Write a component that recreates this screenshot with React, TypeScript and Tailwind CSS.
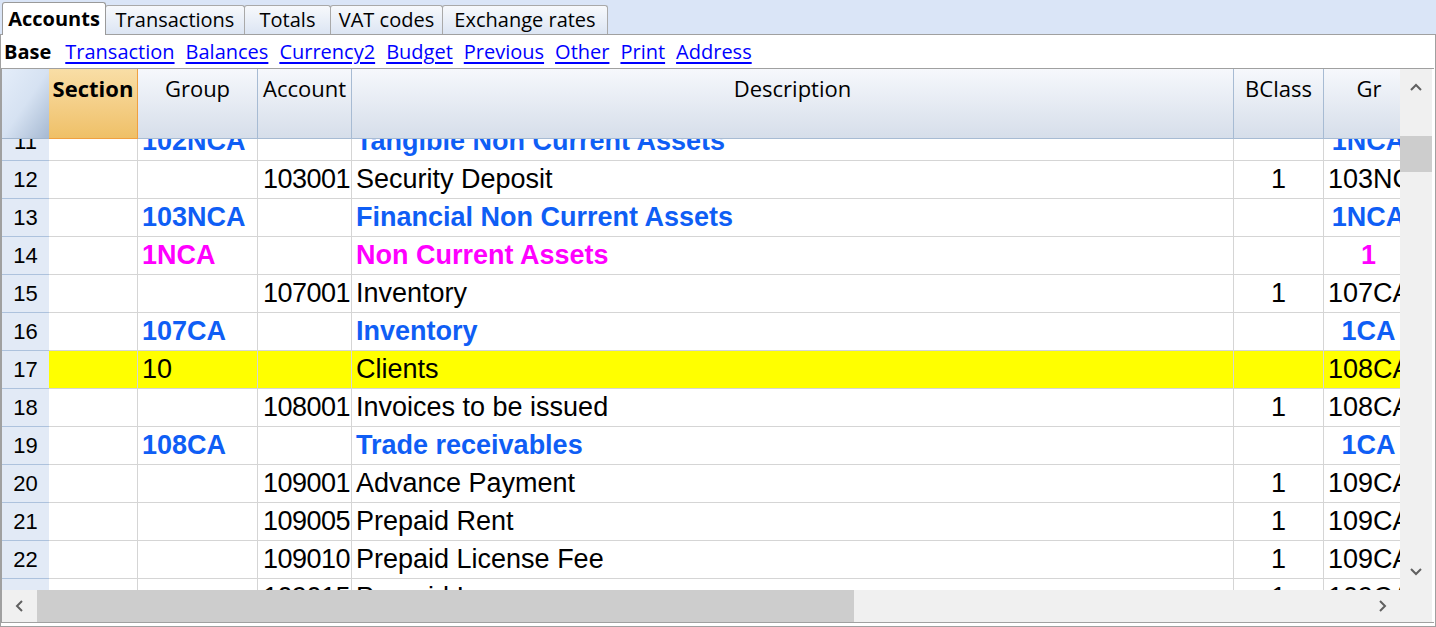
import React from "react";

type Row = {
  n: number;
  group?: string;
  account?: string;
  desc?: string;
  bclass?: string;
  gr?: string;
  kind?: "blue" | "magenta" | "plain";
  yellow?: boolean;
};

const rows: Row[] = [
  { n: 11, group: "102NCA", desc: "Tangible Non Current Assets", gr: "1NCA", kind: "blue" },
  { n: 12, account: "103001", desc: "Security Deposit", bclass: "1", gr: "103NCA" },
  { n: 13, group: "103NCA", desc: "Financial Non Current Assets", gr: "1NCA", kind: "blue" },
  { n: 14, group: "1NCA", desc: "Non Current Assets", gr: "1", kind: "magenta" },
  { n: 15, account: "107001", desc: "Inventory", bclass: "1", gr: "107CA" },
  { n: 16, group: "107CA", desc: "Inventory", gr: "1CA", kind: "blue" },
  { n: 17, group: "10", desc: "Clients", gr: "108CA", yellow: true },
  { n: 18, account: "108001", desc: "Invoices to be issued", bclass: "1", gr: "108CA" },
  { n: 19, group: "108CA", desc: "Trade receivables", gr: "1CA", kind: "blue" },
  { n: 20, account: "109001", desc: "Advance Payment", bclass: "1", gr: "109CA" },
  { n: 21, account: "109005", desc: "Prepaid Rent", bclass: "1", gr: "109CA" },
  { n: 22, account: "109010", desc: "Prepaid License Fee", bclass: "1", gr: "109CA" },
  { n: 23, account: "109015", desc: "Prepaid Insurance", bclass: "1", gr: "109CA" },
];

const tabs = [
  { label: "Accounts", w: "w-[104px]", active: true },
  { label: "Transactions", w: "w-[140px]" },
  { label: "Totals", w: "w-[87px]" },
  { label: "VAT codes", w: "w-[113px]" },
  { label: "Exchange rates", w: "w-[166px]" },
];

const links = ["Transaction", "Balances", "Currency2", "Budget", "Previous", "Other", "Print", "Address"];

const cols = "grid grid-cols-[47px_89px_120px_94px_882px_90px_90px]";

function Chevron({ dir }: { dir: "up" | "down" | "left" | "right" }) {
  const pts = {
    up: "2,9 7,4 12,9",
    down: "2,5 7,10 12,5",
    left: "9,2 4,7 9,12",
    right: "5,2 10,7 5,12",
  }[dir];
  return (
    <svg width="14" height="14" viewBox="0 0 14 14">
      <polyline points={pts} fill="none" stroke="#606060" strokeWidth="2" />
    </svg>
  );
}

function BodyRow({ r }: { r: Row }) {
  const bold = r.kind === "blue" || r.kind === "magenta";
  const color = r.kind === "blue" ? "text-[#0f5ef5]" : r.kind === "magenta" ? "text-[#ff00ff]" : "text-black";
  const bg = r.yellow ? "bg-[#ffff00]" : "bg-white";
  const cell = `h-[38px] border-b border-r border-[#d5d5d5] flex items-center overflow-hidden whitespace-nowrap ${bg} ${color} ${bold ? "font-bold" : ""}`;
  return (
    <div className={`${cols} text-[27px] font-['Liberation_Sans',Arial,sans-serif]`}>
      <div className="h-[38px] border-b border-[#adc2dd] bg-[#e2eaf6] flex items-center justify-center text-[22px] text-black">
        {r.n}
      </div>
      <div className={cell} />
      <div className={`${cell} pl-[4px]`}>{r.group}</div>
      <div className={`${cell} justify-end pr-[1px] tracking-[-0.5px]`}>{r.account}</div>
      <div className={`${cell} pl-[4px]`}>{r.desc}</div>
      <div className={`${cell} justify-center`}>{r.bclass}</div>
      <div className={`${cell} ${bold ? "justify-center" : "pl-[4px]"}`}>{r.gr}</div>
    </div>
  );
}

export default function App() {
  return (
    <div className="w-[1436px] h-[627px] bg-[#dae5f7] flex flex-col overflow-hidden font-['Open_Sans','Noto_Sans',sans-serif]">
      {/* Tabs */}
      <div className="h-[34px] flex items-end pl-[2px] shrink-0">
        {tabs.map((t) =>
          t.active ? (
            <div
              key={t.label}
              className={`${t.w} h-[33px] -mb-px relative z-10 bg-white border border-b-0 border-[#9a9a9a] rounded-t-[3px] flex items-center justify-center text-[20px] font-bold text-black`}
            >
              {t.label}
            </div>
          ) : (
            <div
              key={t.label}
              className={`${t.w} h-[29px] bg-gradient-to-b from-[#f7f9fc] to-[#dce5f3] border border-b-0 border-[#a9a9a9] rounded-t-[3px] -ml-px flex items-center justify-center text-[20px] text-black`}
            >
              {t.label}
            </div>
          )
        )}
      </div>

      {/* Panel */}
      <div className="flex-1 bg-white border border-[#a0a0a0] flex flex-col min-h-0">
        <div className="h-[33px] shrink-0 flex items-center pl-[3px] gap-[11px] text-[20px]">
          <span className="font-bold text-black mr-[3px]">Base</span>
          {links.map((l) => (
            <span key={l} className="text-[#0000ff] underline underline-offset-[3px]">
              {l}
            </span>
          ))}
        </div>

        <div className="h-[555px] shrink-0 border-t border-b border-l border-[#a0a0a0] mr-[1px] flex">
          {/* Grid area */}
          <div className="w-[1398px] flex flex-col">
            <div className="h-[521px] overflow-hidden flex flex-col">
              {/* Header */}
              <div className={`${cols} h-[70px] shrink-0 text-[22px] text-black`}>
                <div className="bg-gradient-to-br from-[#e4edf9] via-[#d6e2f2] to-[#a6b9d2] border-b border-[#a0b4cc]" />
                <div className="bg-gradient-to-b from-[#f9dea6] to-[#efc067] border-r border-b border-[#f0a040] text-center font-bold pt-[3px]">
                  Section
                </div>
                <div className="bg-gradient-to-b from-[#f6f8fc] to-[#d6deea] border-r border-b border-[#a7bbd3] text-center pt-[3px]">
                  Group
                </div>
                <div className="bg-gradient-to-b from-[#f6f8fc] to-[#d6deea] border-r border-b border-[#a7bbd3] text-center pt-[3px] whitespace-nowrap">
                  Account
                </div>
                <div className="bg-gradient-to-b from-[#f6f8fc] to-[#d6deea] border-r border-b border-[#a7bbd3] text-center pt-[3px]">
                  Description
                </div>
                <div className="bg-gradient-to-b from-[#f6f8fc] to-[#d6deea] border-r border-b border-[#a7bbd3] text-center pt-[3px]">
                  BClass
                </div>
                <div className="bg-gradient-to-b from-[#f6f8fc] to-[#d6deea] border-b border-[#a7bbd3] text-center pt-[3px]">
                  Gr
                </div>
              </div>
              {/* Body */}
              <div className="flex-1 overflow-hidden">
                <div className="-mt-[16px]">
                  {rows.map((r) => (
                    <BodyRow key={r.n} r={r} />
                  ))}
                </div>
              </div>
            </div>
            {/* Horizontal scrollbar */}
            <div className="h-[32px] bg-[#f0f0f0] flex items-center">
              <div className="w-[35px] flex justify-center">
                <Chevron dir="left" />
              </div>
              <div className="w-[817px] h-full bg-[#cdcdcd]" />
              <div className="flex-1" />
              <div className="w-[36px] flex justify-center">
                <Chevron dir="right" />
              </div>
            </div>
          </div>
          {/* Vertical scrollbar */}
          <div className="w-[32px] bg-[#f0f0f0] flex flex-col">
            <div className="h-[35px] flex items-center justify-center pt-[2px]">
              <Chevron dir="up" />
            </div>
            <div className="h-[32px]" />
            <div className="h-[36px] bg-[#cdcdcd]" />
            <div className="flex-1" />
            <div className="h-[35px] flex items-center justify-center pb-[3px]">
              <Chevron dir="down" />
            </div>
            <div className="h-[32px]" />
          </div>
        </div>
      </div>
    </div>
  );
}
